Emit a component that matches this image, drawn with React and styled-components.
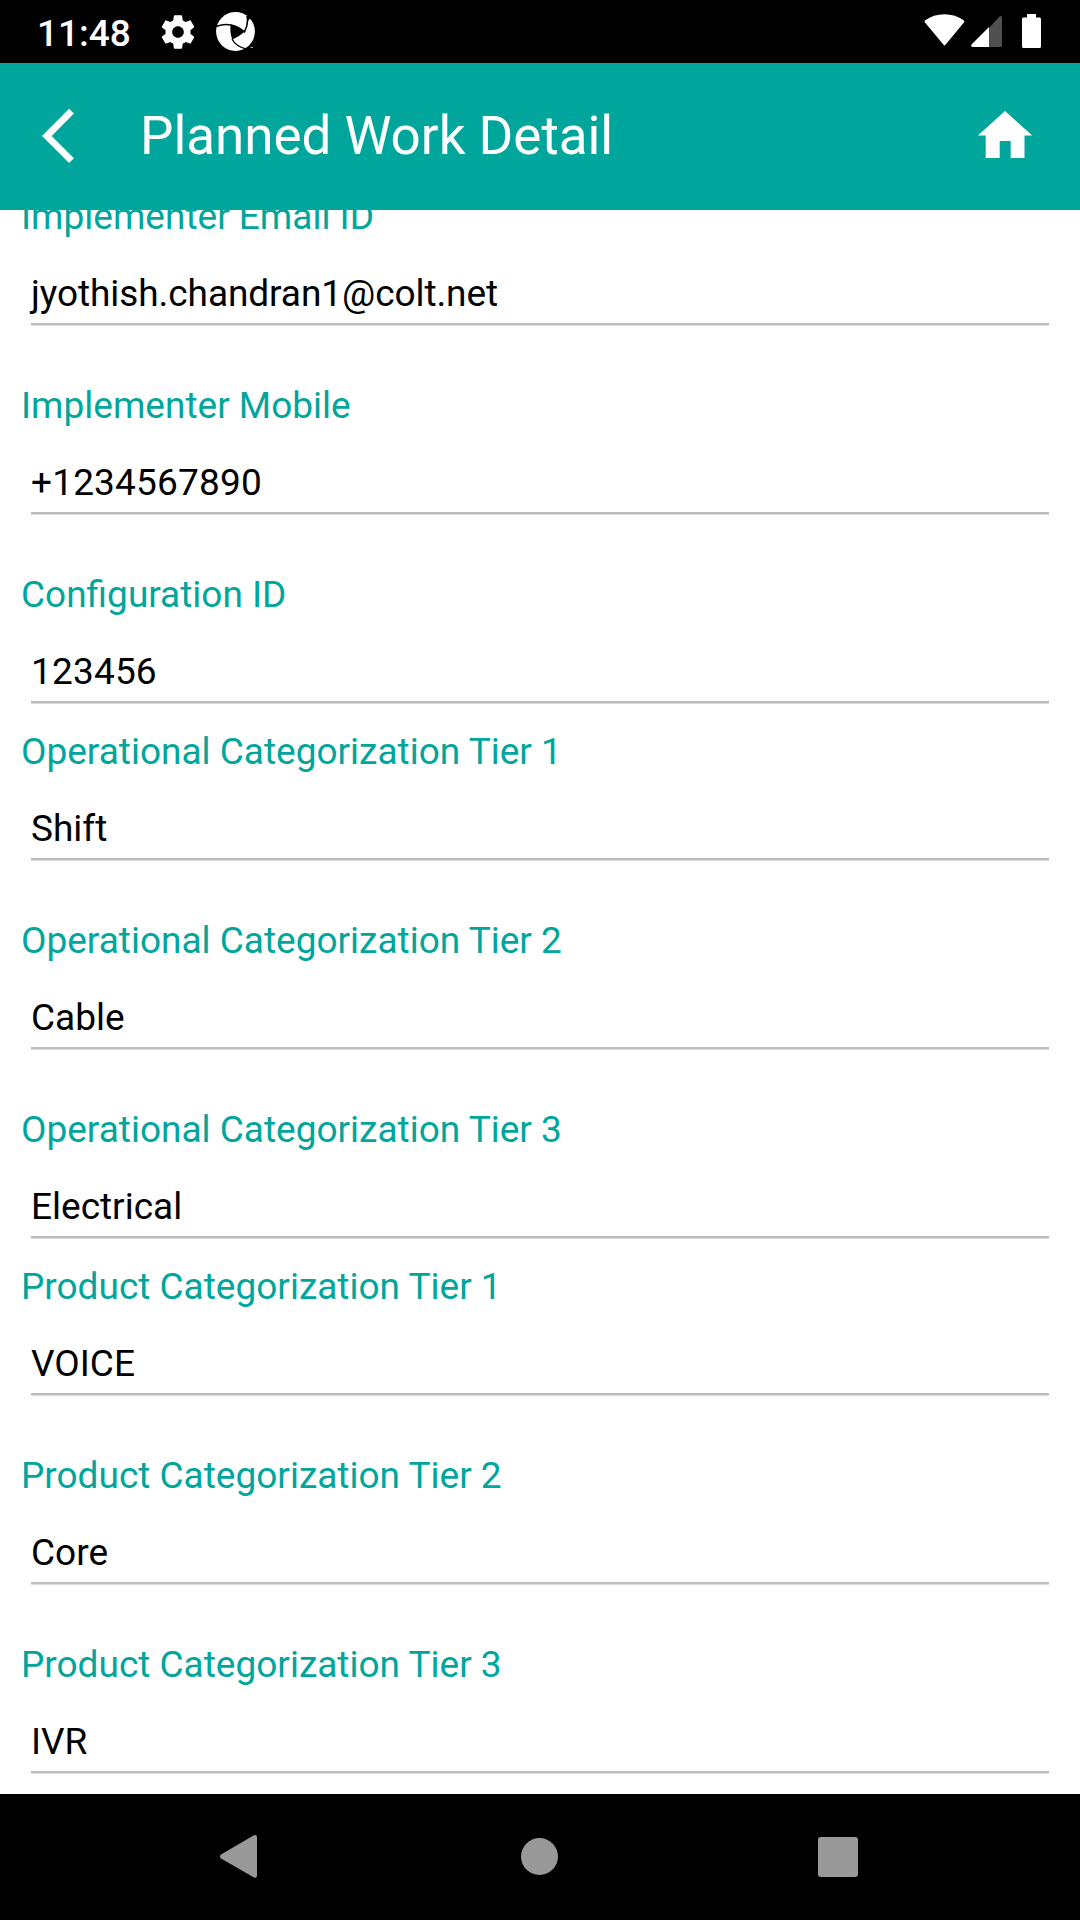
import React from "react";
import styled, { createGlobalStyle } from "styled-components";

const Global = createGlobalStyle`
  * { box-sizing: border-box; }
  body { margin: 0; background: #fff; font-family: Roboto, "Noto Sans", sans-serif; }
`;

const Screen = styled.div`
  display: flex;
  flex-direction: column;
  width: 1080px;
  height: 1920px;
  overflow: hidden;
  background: #fff;
`;

const StatusBar = styled.div`
  flex: none;
  display: flex;
  justify-content: space-between;
  height: 63px;
  padding: 0 38px 0 37px;
  background: #000;
  color: #fff;
`;

const StatusGroup = styled.div`
  display: flex;
  align-items: flex-start;
`;

const Clock = styled.time`
  width: 119px;
  padding-top: 12px;
  font-size: 37px;
  font-weight: 500;
  line-height: 43px;
`;

const Glyph = styled.svg`
  display: block;
  flex: none;
  width: ${(p) => p.$w}px;
  height: ${(p) => p.$h}px;
  margin: ${(p) => p.$m || "0"};
`;

const AppBar = styled.header`
  flex: none;
  display: flex;
  align-items: flex-start;
  height: 147px;
  padding: 0 47px 0 42px;
  background: #00a69c;
  color: #fff;
`;

const Title = styled.h1`
  flex: 1;
  margin: 42px 0 0 64px;
  font-size: 53px;
  font-weight: 400;
  line-height: 62px;
  letter-spacing: -0.05px;
  white-space: nowrap;
`;

const IconButton = styled.button`
  flex: none;
  padding: 0;
  border: 0;
  background: none;
  color: inherit;
`;

const Content = styled.main`
  flex: 1;
  min-height: 0;
  overflow: hidden;
`;

const Form = styled.div`
  margin-top: -41px;
`;

const Group = styled.section`
  display: flex;
  flex-direction: column;
  gap: 32px;
`;

const Field = styled.div`
  height: 157px;
  padding: 26px 31px 0 21px;
`;

const Label = styled.div`
  height: 44px;
  color: #00a69c;
  font-size: 37px;
  line-height: 44px;
  white-space: nowrap;
`;

const Value = styled.div`
  height: 87px;
  margin-left: 10px;
  padding-top: 33px;
  border-bottom: 1px solid #dcdcdc;
  box-shadow: inset 0 -2px 0 #bdbdbd;
  color: #000;
  font-size: 37px;
  line-height: 44px;
  letter-spacing: ${(p) => p.$tracking || 0}px;
  white-space: nowrap;
`;

const NavBar = styled.nav`
  flex: none;
  display: flex;
  align-items: flex-start;
  height: 126px;
  padding: 0 222px 0 219px;
  justify-content: space-between;
  background: #000;
`;

const groups = [
  [
    ["Implementer Email ID", "jyothish.chandran1@colt.net", -0.07],
    ["Implementer Mobile", "+1234567890", 0.18],
    ["Configuration ID", "123456", 0.18],
  ],
  [
    ["Operational Categorization Tier 1", "Shift"],
    ["Operational Categorization Tier 2", "Cable"],
    ["Operational Categorization Tier 3", "Electrical"],
  ],
  [
    ["Product Categorization Tier 1", "VOICE"],
    ["Product Categorization Tier 2", "Core"],
    ["Product Categorization Tier 3", "IVR"],
  ],
];

const GearIcon = () => (
  <Glyph $w={40} $h={40} $m="11.5px 14px 0 1.7px" viewBox="0 0 24 24" fill="#fff">
    <path d="M19.43 12.98c.04-.32.07-.64.07-.98s-.03-.66-.07-.98l2.11-1.65c.19-.15.24-.42.12-.64l-2-3.46c-.12-.22-.39-.3-.61-.22l-2.49 1c-.52-.4-1.08-.73-1.69-.98l-.38-2.65C14.46 2.18 14.25 2 14 2h-4c-.25 0-.46.18-.49.42l-.38 2.65c-.61.25-1.17.59-1.69.98l-2.49-1c-.23-.09-.49 0-.61.22l-2 3.46c-.13.22-.07.49.12.64l2.11 1.65c-.04.32-.07.65-.07.98s.03.66.07.98l-2.11 1.65c-.19.15-.24.42-.12.64l2 3.46c.12.22.39.3.61.22l2.49-1c.52.4 1.08.73 1.69.98l.38 2.65c.03.24.24.42.49.42h4c.25 0 .46-.18.49-.42l.38-2.65c.61-.25 1.17-.59 1.69-.98l2.49 1c.23.09.49 0 .61-.22l2-3.46c.12-.22.07-.49-.12-.64l-2.11-1.65zM12 15.5c-1.93 0-3.5-1.57-3.5-3.5s1.57-3.5 3.5-3.5 3.5 1.57 3.5 3.5-1.57 3.5-3.5 3.5z" />
  </Glyph>
);

const ApertureIcon = () => (
  <Glyph $w={40} $h={40} $m="12px 0 0 4px" viewBox="0 0 40 40">
    <circle cx="19.500" cy="19.500" r="19.400" fill="#fff" />
    <path d="M14.700 12.500Q22 13.500 28.500 19.800Q23 25 16.300 27.500Q13.500 20 14.700 12.500Z" fill="#000" />
    <path d="M0 14.600Q15 8.500 28.500 19.800Q32.500 12.500 31.300 4" fill="none" stroke="#000" strokeWidth="1.600" />
    <path d="M30.500 3.500L35 5.500L32.300 8.500L31.500 12Z" fill="#000" />
    <path d="M16 27Q19.500 34.500 31 37.200" fill="none" stroke="#000" strokeWidth="1.300" />
    <path d="M26.500 38.500L31 35.600L34 35.500L33 39Z" fill="#000" />
    <path d="M34.500 35.500H37" stroke="#aaa" strokeWidth="1" />
  </Glyph>
);

export default function App() {
  return (
    <Screen>
      <Global />
      <StatusBar>
        <StatusGroup>
          <Clock>11:48</Clock>
          <GearIcon />
          <ApertureIcon />
        </StatusGroup>
        <StatusGroup>
          <Glyph $w={41} $h={32} $m="14px 6px 0 0" viewBox="0 0 41 32" fill="#fff">
            <path d="M.8 8.200Q0 7.200 1.200 6.300Q9.500.3 20.500.3T39.700 6.300Q40.900 7.200 40.100 8.200L21.500 30.800Q20.500 32 19.500 30.800Z" />
          </Glyph>
          <Glyph $w={31} $h={32} $m="15px 20px 0 0" viewBox="0 0 31 32" fill="#fff">
            <path d="M18 13L28.500 1.500Q31 0 31 2.500V30.500Q31 32 29.500 32H18Z" fill="#505050" />
            <path d="M18 12V32H1.500Q-.5 31.500.5 29.500Z" />
          </Glyph>
          <Glyph $w={19} $h={34} $m="14px 1px 0 0" viewBox="0 0 19 34" fill="#fff">
            <path d="M5 0H14V3.500H17.500Q19 3.500 19 5V32.500Q19 34 17.500 34H1.500Q0 34 0 32.500V5Q0 3.500 1.500 3.500H5Z" />
          </Glyph>
        </StatusGroup>
      </StatusBar>
      <AppBar>
        <IconButton aria-label="Back">
          <Glyph $w={34} $h={56} $m="45px 0 0" viewBox="0 0 34 56" fill="none" stroke="#fff" strokeWidth="6.800">
            <path d="M29.500 3.200L4.800 28L29.500 52.600" />
          </Glyph>
        </IconButton>
        <Title>Planned Work Detail</Title>
        <IconButton aria-label="Home">
          <Glyph $w={55} $h={47} $m="48px 0 0" viewBox="0 0 55 47" fill="#fff">
            <path d="M27 0L54.300 24.600H46.500V47H32.700V30H21.700V47H7.700V24.600H-.2Z" />
          </Glyph>
        </IconButton>
      </AppBar>
      <Content>
        <Form>
          {groups.map((fields, i) => (
            <Group key={i}>
              {fields.map(([label, value, tracking]) => (
                <Field key={label}>
                  <Label>{label}</Label>
                  <Value $tracking={tracking}>{value}</Value>
                </Field>
              ))}
            </Group>
          ))}
        </Form>
      </Content>
      <NavBar>
        <IconButton aria-label="System back">
          <Glyph $w={38} $h={43} $m="41px 0 0" viewBox="0 0 38 43" fill="#999">
            <path d="M35 .3Q38 -.7 38 2.300V40.500Q38 43.500 35 42.500L2 23.500Q0 21.500 2 19.500Z" />
          </Glyph>
        </IconButton>
        <IconButton aria-label="System home">
          <Glyph $w={37} $h={37} $m="44px 0 0 4px" viewBox="0 0 37 37" fill="#999">
            <circle cx="18.500" cy="18.500" r="18.500" />
          </Glyph>
        </IconButton>
        <IconButton aria-label="Recent apps">
          <Glyph $w={40} $h={40} $m="43px 0 0" viewBox="0 0 40 40" fill="#999">
            <rect width="40" height="40" rx="3" />
          </Glyph>
        </IconButton>
      </NavBar>
    </Screen>
  );
}
